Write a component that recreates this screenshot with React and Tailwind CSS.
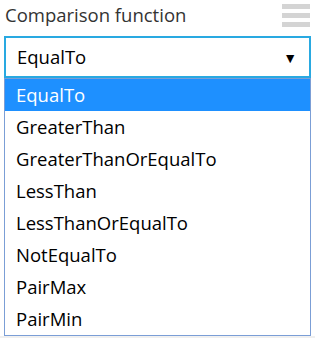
const options = [
  'EqualTo',
  'GreaterThan',
  'GreaterThanOrEqualTo',
  'LessThan',
  'LessThanOrEqualTo',
  'NotEqualTo',
  'PairMax',
  'PairMin',
]

export default function App() {
  const selected = 'EqualTo'
  return (
    <div className="w-[315px] h-[338px] bg-white overflow-hidden flex flex-col" style={{ fontFamily: '"Open Sans", "Noto Sans", sans-serif' }}>
      <div className="flex items-start justify-between pl-[5px] pr-[5px] pt-[2px] h-[36px]">
        <span className="text-[18.5px] leading-[26px] text-[#333]">Comparison function</span>
        <div className="mt-[2px] flex flex-col gap-[4px] w-[28px]">
          <span className="h-[5px] bg-[#d4d4d4]" />
          <span className="h-[5px] bg-[#d4d4d4]" />
          <span className="h-[5px] bg-[#d4d4d4]" />
        </div>
      </div>

      <div className="mx-[4px] h-[42px] border-2 border-[#29a9e1] flex items-center justify-between pl-[11px] pr-[12px]">
        <span className="text-[18.5px] text-black">{selected}</span>
        <span className="text-[14px] text-black">▼</span>
      </div>

      <ul className="mx-[4px] h-[258px] border border-[#7b9ed6] flex flex-col">
        {options.map((o) => (
          <li key={o}
            className={`h-[32px] shrink-0 flex items-center pl-[11px] text-[18.5px] ${o === selected ? 'bg-[#1e90ff] text-white' : 'text-black'}`}>
            {o}
          </li>
        ))}
      </ul>
      <div className="flex-1 bg-[#f0f0f0]" />
    </div>
  )
}
